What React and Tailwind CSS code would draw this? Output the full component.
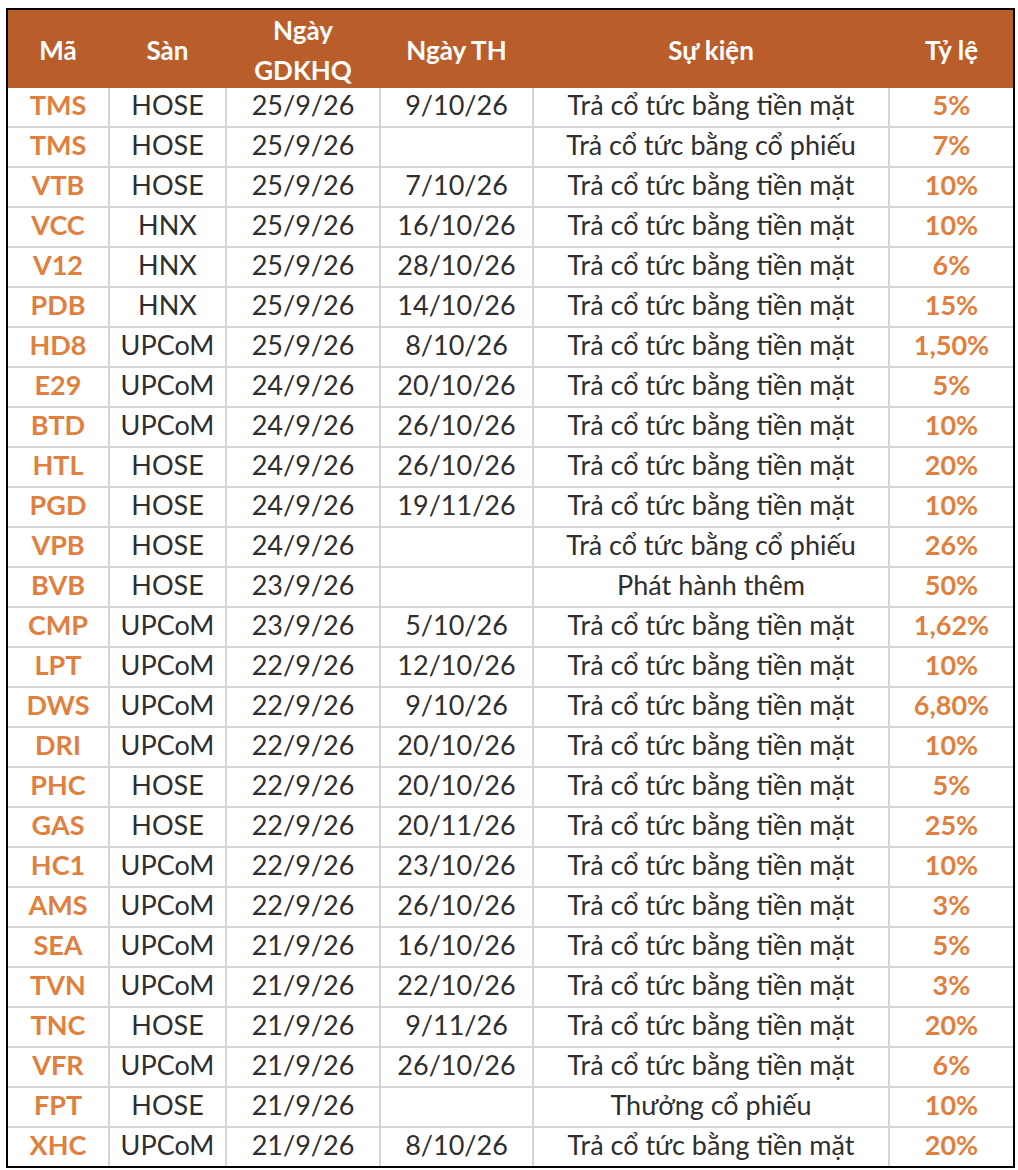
const rows = [
  ['TMS', 'HOSE', '25/9/26', '9/10/26', 'Trả cổ tức bằng tiền mặt', '5%'],
  ['TMS', 'HOSE', '25/9/26', '', 'Trả cổ tức bằng cổ phiếu', '7%'],
  ['VTB', 'HOSE', '25/9/26', '7/10/26', 'Trả cổ tức bằng tiền mặt', '10%'],
  ['VCC', 'HNX', '25/9/26', '16/10/26', 'Trả cổ tức bằng tiền mặt', '10%'],
  ['V12', 'HNX', '25/9/26', '28/10/26', 'Trả cổ tức bằng tiền mặt', '6%'],
  ['PDB', 'HNX', '25/9/26', '14/10/26', 'Trả cổ tức bằng tiền mặt', '15%'],
  ['HD8', 'UPCoM', '25/9/26', '8/10/26', 'Trả cổ tức bằng tiền mặt', '1,50%'],
  ['E29', 'UPCoM', '24/9/26', '20/10/26', 'Trả cổ tức bằng tiền mặt', '5%'],
  ['BTD', 'UPCoM', '24/9/26', '26/10/26', 'Trả cổ tức bằng tiền mặt', '10%'],
  ['HTL', 'HOSE', '24/9/26', '26/10/26', 'Trả cổ tức bằng tiền mặt', '20%'],
  ['PGD', 'HOSE', '24/9/26', '19/11/26', 'Trả cổ tức bằng tiền mặt', '10%'],
  ['VPB', 'HOSE', '24/9/26', '', 'Trả cổ tức bằng cổ phiếu', '26%'],
  ['BVB', 'HOSE', '23/9/26', '', 'Phát hành thêm', '50%'],
  ['CMP', 'UPCoM', '23/9/26', '5/10/26', 'Trả cổ tức bằng tiền mặt', '1,62%'],
  ['LPT', 'UPCoM', '22/9/26', '12/10/26', 'Trả cổ tức bằng tiền mặt', '10%'],
  ['DWS', 'UPCoM', '22/9/26', '9/10/26', 'Trả cổ tức bằng tiền mặt', '6,80%'],
  ['DRI', 'UPCoM', '22/9/26', '20/10/26', 'Trả cổ tức bằng tiền mặt', '10%'],
  ['PHC', 'HOSE', '22/9/26', '20/10/26', 'Trả cổ tức bằng tiền mặt', '5%'],
  ['GAS', 'HOSE', '22/9/26', '20/11/26', 'Trả cổ tức bằng tiền mặt', '25%'],
  ['HC1', 'UPCoM', '22/9/26', '23/10/26', 'Trả cổ tức bằng tiền mặt', '10%'],
  ['AMS', 'UPCoM', '22/9/26', '26/10/26', 'Trả cổ tức bằng tiền mặt', '3%'],
  ['SEA', 'UPCoM', '21/9/26', '16/10/26', 'Trả cổ tức bằng tiền mặt', '5%'],
  ['TVN', 'UPCoM', '21/9/26', '22/10/26', 'Trả cổ tức bằng tiền mặt', '3%'],
  ['TNC', 'HOSE', '21/9/26', '9/11/26', 'Trả cổ tức bằng tiền mặt', '20%'],
  ['VFR', 'UPCoM', '21/9/26', '26/10/26', 'Trả cổ tức bằng tiền mặt', '6%'],
  ['FPT', 'HOSE', '21/9/26', '', 'Thưởng cổ phiếu', '10%'],
  ['XHC', 'UPCoM', '21/9/26', '8/10/26', 'Trả cổ tức bằng tiền mặt', '20%'],
]

const cols = 'grid grid-cols-[100px_115px_152px_151px_354px_123px]'

export default function App() {
  return (
    <div className="bg-white w-[1018px] h-[1170px] pt-[8px] pl-[6px] font-['Lato',sans-serif]">
      <div className="w-[1009px] border-2 border-black">
        <div className={`${cols} gap-x-[2px] h-[78px] pb-[3px] bg-[#b95e2b] text-white font-bold text-[26px] leading-[40px]`}>
          <div className="flex items-center justify-center">Mã</div>
          <div className="flex items-center justify-center">Sàn</div>
          <div className="flex flex-col items-center justify-center text-center">
            <span>Ngày</span>
            <span>GDKHQ</span>
          </div>
          <div className="flex items-center justify-center">Ngày TH</div>
          <div className="flex items-center justify-center">Sự kiện</div>
          <div className="flex items-center justify-center">Tỷ lệ</div>
        </div>
        <div className={`${cols} gap-[2px] bg-[#d4d4d4] text-[27px]`}>
          {rows.map((r, i) =>
            r.map((c, j) => (
              <div
                key={i + '-' + j}
                className={
                  'h-[38px] pb-[3px] bg-white flex items-center justify-center ' +
                  (j === 0 || j === 5 ? 'font-bold text-[#e07f3e]' : 'text-[#2e2e2e]')
                }
              >
                {c}
              </div>
            ))
          )}
        </div>
      </div>
    </div>
  )
}
